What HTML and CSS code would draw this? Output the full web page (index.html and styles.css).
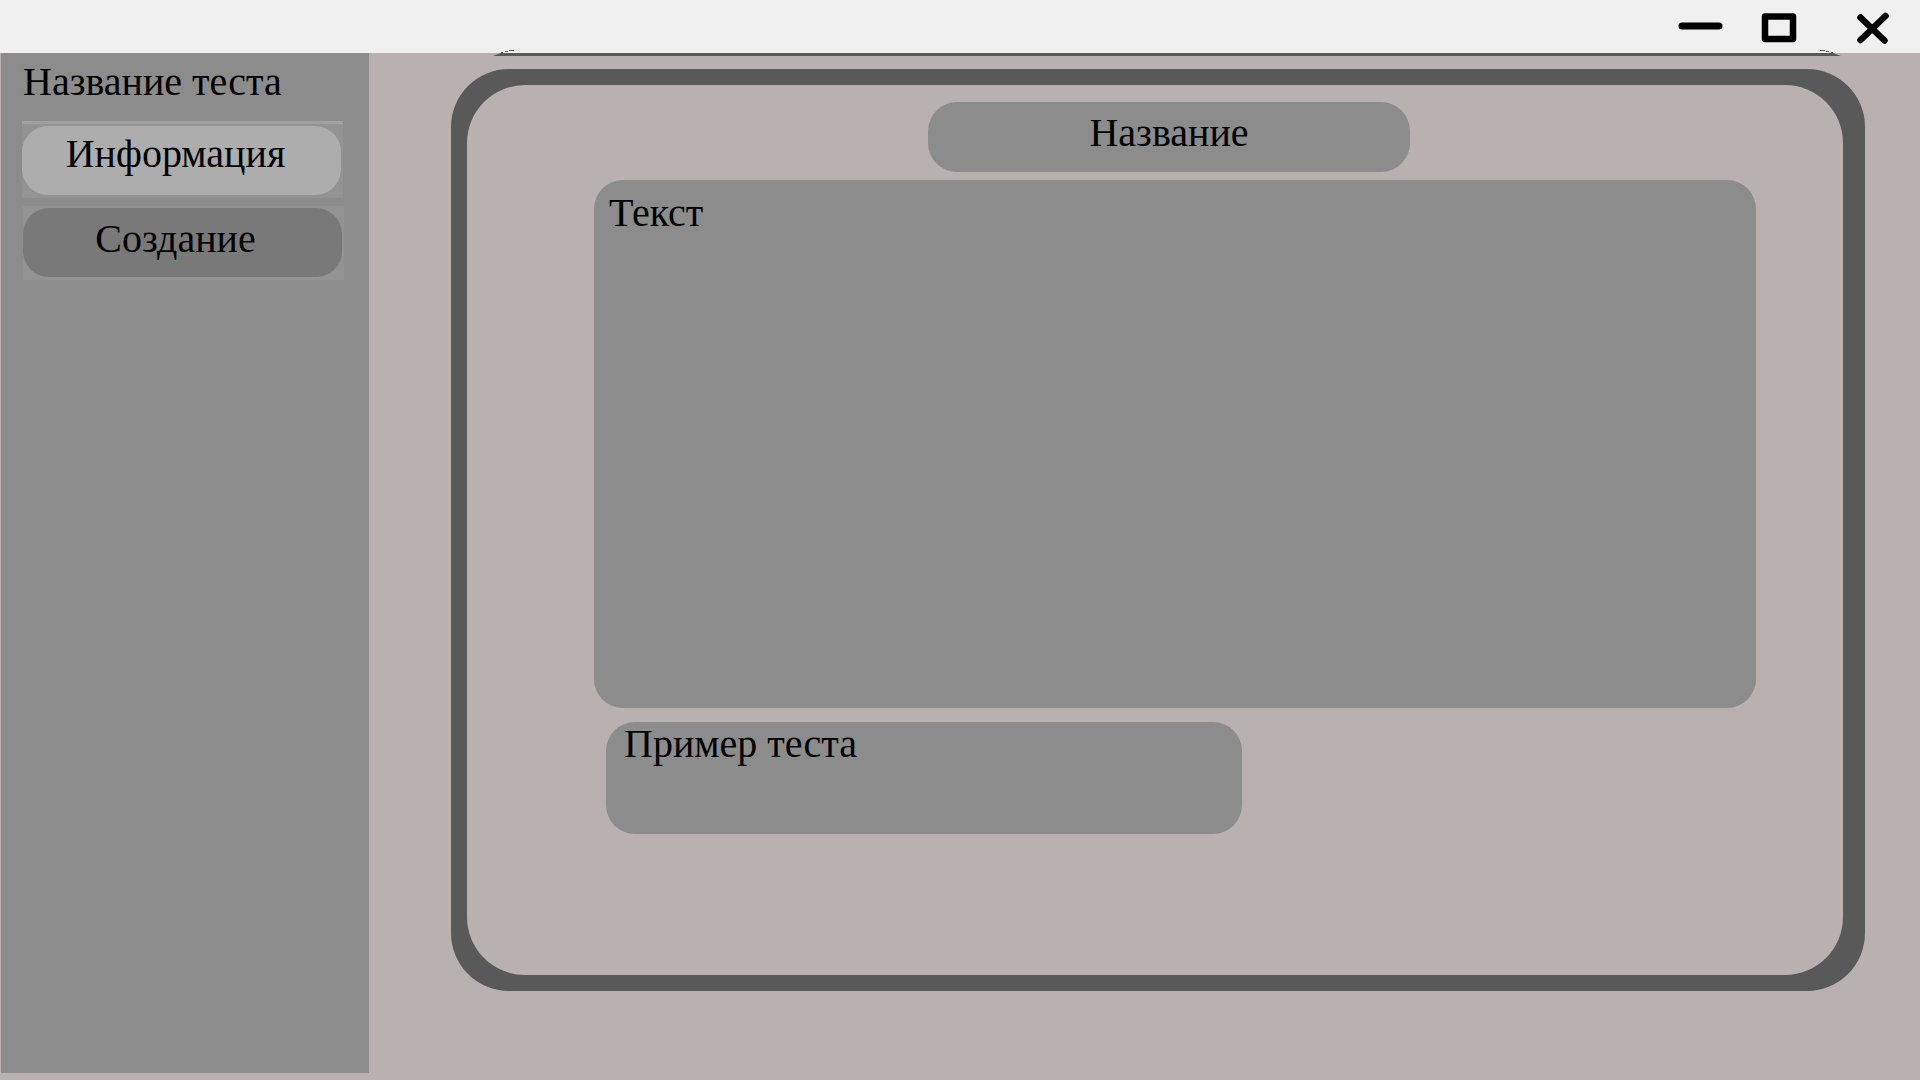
FILE: index.html
```html
<!DOCTYPE html>
<html lang="ru">
<head>
<meta charset="utf-8">
<title>Название теста</title>
<link rel="stylesheet" href="styles.css">
</head>
<body>
<header class="titlebar">
  <button class="window-button" type="button" aria-label="Свернуть">
    <svg class="icon" viewBox="0 0 56 40"><path d="M14 19H51" stroke-width="7"/></svg>
  </button>
  <button class="window-button" type="button" aria-label="Развернуть">
    <svg class="icon" viewBox="0 0 56 40"><path d="M5 9.500H33V32H5Z" stroke-width="6.500"/></svg>
  </button>
  <button class="window-button" type="button" aria-label="Закрыть">
    <svg class="icon" viewBox="0 0 56 40"><path d="M8.500 10.500L32.500 33.500M33.500 9L8.500 33" stroke-width="6.500"/></svg>
  </button>
</header>
<div class="workspace">
  <nav class="sidebar">
    <h1 class="sidebar-title">Название теста</h1>
    <div class="tab-frame tab-frame-active">
      <button class="tab tab-active" type="button">Информация</button>
    </div>
    <div class="tab-frame tab-frame-shifted">
      <button class="tab" type="button">Создание</button>
    </div>
  </nav>
  <main class="content">
    <svg class="panel-edge" viewBox="0 0 1348 7" preserveAspectRatio="none" aria-hidden="true">
      <path d="M8 4H1340L1348 7H0Z"/>
      <path d="M8 3h2v1h-2zM12 2h3v1h-3zM16 1h5v1h-5zM1327 1h5v1h-5zM1333 2h3v1h-3zM1338 3h2v1h-2z"/>
    </svg>
    <section class="panel">
      <div class="panel-body">
        <h2 class="card heading">Название</h2>
        <div class="card text">Текст</div>
        <div class="card example">Пример теста</div>
      </div>
    </section>
  </main>
</div>
</body>
</html>
```
FILE: styles.css
```css
* {
  box-sizing: border-box;
}

body {
  margin: 0;
  min-height: 100vh;
  display: flex;
  flex-direction: column;
  background: #b9b0b0;
  color: #000;
  font-family: "Liberation Serif", "Times New Roman", serif;
  font-size: 40px;
  line-height: 46px;
}

h1,
h2 {
  margin: 0;
  font: inherit;
}

button {
  border: 0;
  padding: 0;
  color: inherit;
  font: inherit;
}

.titlebar {
  display: flex;
  justify-content: flex-end;
  gap: 36px;
  height: 53px;
  padding: 7px 12px 0 0;
  background: #f0f0f0;
}

.window-button {
  width: 56px;
  height: 40px;
  background: none;
}

.icon {
  display: block;
  width: 56px;
  height: 40px;
  fill: none;
  stroke: #000;
  stroke-linecap: round;
  stroke-linejoin: round;
}

.workspace {
  flex: 1;
  display: flex;
  padding-left: 1px;
}

.sidebar {
  width: 368px;
  flex-shrink: 0;
  margin-bottom: 7px;
  padding: 6px 25px 0 21px;
  background: #8c8c8c;
}

.sidebar-title {
  padding-left: 1px;
  margin-bottom: 16px;
}

.tab-frame {
  width: 321px;
  height: 74px;
  padding: 2px 2px 3px 0;
  background: #939393;
}

.tab-frame-active {
  height: 77px;
  border-top: 3px solid #a0a0a0;
}

.tab-frame-shifted {
  margin: 8px 0 0 1px;
}

.tab {
  display: block;
  width: 100%;
  height: 69px;
  padding: 0 14px 8px 0;
  border-radius: 26px;
  background: #797979;
}

.tab-active {
  padding: 0 12px 14px 0;
  background: #adadad;
}

.content {
  flex: 1;
  display: flex;
  flex-direction: column;
  min-width: 0;
  padding: 0 55px 89px 82px;
}

.panel-edge {
  display: block;
  height: 7px;
  margin: -4px 24px 13px 42px;
  fill: #595959;
}

.panel {
  flex: 1;
  display: flex;
  padding: 16px 22px 16px 16px;
  border-radius: 58px;
  background: #595959;
}

.panel-body {
  flex: 1;
  padding: 17px 87px 24px 127px;
  border-radius: 58px;
  background: #b9b0b0;
}

.card {
  border-radius: 29px;
  background: #8c8c8c;
}

.heading {
  min-height: 70px;
  margin: 0 346px 8px 334px;
  padding: 8px 0;
  text-align: center;
}

.text {
  min-height: 528px;
  margin-bottom: 14px;
  padding: 10px 15px;
}

.example {
  max-width: 636px;
  min-height: 112px;
  margin-left: 12px;
  padding: 0 18px;
  line-height: 44px;
}
```
